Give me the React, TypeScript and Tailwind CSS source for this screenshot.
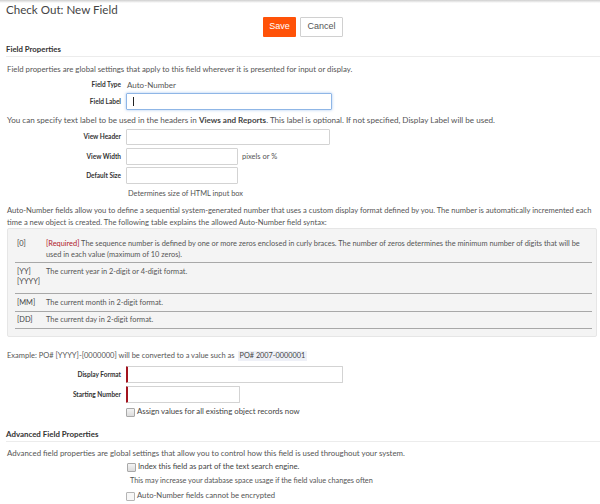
import React from "react";

const Label = ({ children }: { children: React.ReactNode }) => (
  <div className="w-[115px] shrink-0 text-right text-[6.5px] font-bold text-[#333]">{children}</div>
);

const Check = () => (
  <span className="inline-block w-[9px] h-[9px] border border-[#a9a9a9] bg-linear-to-b from-[#f4f4f4] to-[#dcdcdc] rounded-[1px] shrink-0" />
);

export default function App() {
  return (
    <div className="w-[600px] h-[504px] overflow-hidden bg-white text-[#555] text-[7.5px]" style={{ fontFamily: "Lato, 'Open Sans', sans-serif" }}>
      <div className="h-[3px] bg-linear-to-b from-[#cfcfcf] to-white" />
      <div className="h-[14px] leading-[14px] pl-[6px] text-[11.6px] text-[#444]">Check Out: New Field</div>
      <div className="h-[20px] flex justify-center gap-[4px] pl-[6px]" style={{ fontFamily: "'Liberation Sans', Arial, sans-serif" }}>
        <button className="w-[33px] h-[20px] bg-[#ff5208] text-white text-[9px] rounded-[1px]">Save</button>
        <button className="w-[43px] h-[20px] bg-white border border-[#d0d0d0] text-[#555] text-[9px] rounded-[1px]">Cancel</button>
      </div>
      <div className="mt-[5px] h-[15px] leading-[14px] ml-[6px] border-b border-[#ececec] text-[7.8px] font-bold text-[#333]">Field Properties</div>
      <div className="mt-[6px] h-[12px] leading-[12px] pl-[7px] text-[7.8px]">Field properties are global settings that apply to this field wherever it is presented for input or display.</div>
      <div className="mt-[4px] h-[12px] flex items-center gap-[6px] pl-[6px]">
        <Label>Field Type</Label>
        <span className="text-[8px] text-[#555]">Auto-Number</span>
      </div>
      <div className="mt-[2px] h-[17px] flex items-center gap-[5px] pl-[6px]">
        <Label>Field Label</Label>
        <div className="w-[206px] h-[17px] border border-[#8fb6e6] rounded-[1px] shadow-[0_0_3px_rgba(90,150,230,0.55)] flex items-center pl-[6px]">
          <span className="w-px h-[9px] bg-[#222]" />
        </div>
      </div>
      <div className="mt-[4px] h-[12px] leading-[12px] pl-[7px] text-[8.1px] whitespace-nowrap">
        You can specify text label to be used in the headers in <b className="text-[#444]">Views and Reports</b>. This label is optional. If not specified, Display Label will be used.
      </div>
      <div className="mt-[3px] h-[16px] flex items-center gap-[5px] pl-[6px]">
        <Label>View Header</Label>
        <div className="w-[204px] h-[16px] border border-[#d3d3d3] rounded-[1px]" />
      </div>
      <div className="mt-[3px] h-[17px] flex items-center gap-[5px] pl-[6px]">
        <Label>View Width</Label>
        <div className="w-[112px] h-[17px] border border-[#d3d3d3] rounded-[1px]" />
        <span className="ml-[-1px]">pixels or %</span>
      </div>
      <div className="mt-[2px] h-[17px] flex items-center gap-[5px] pl-[6px]">
        <Label>Default Size</Label>
        <div className="w-[112px] h-[17px] border border-[#d3d3d3] rounded-[1px]" />
      </div>
      <div className="mt-[4px] h-[12px] leading-[12px] pl-[128px] text-[7.4px]">Determines size of HTML input box</div>
      <div className="mt-[5px] leading-[11.5px] pl-[7px] pr-[4px] text-[7.6px]">
        Auto-Number fields allow you to define a sequential system-generated number that uses a custom display format defined by you. The number is automatically incremented each time a new object is created. The following table explains the allowed Auto-Number field syntax:
      </div>
      <div className="ml-[7px] mr-[3px] h-[109px] bg-[#f4f4f4] border border-[#e6e6e6] rounded-[2px] pt-[7px] pl-[7px] pr-[4px] text-[7.4px] text-[#555]">
        <div className="h-[27px] flex border-b border-[#a8a8a8] leading-[11px] pt-[2px]">
          <div className="w-[31px] pl-[2px] shrink-0 text-[#444]">[0]</div>
          <div><span className="text-[#b0202a]">[Required]</span> The sequence number is defined by one or more zeros enclosed in curly braces. The number of zeros determines the minimum number of digits that will be used in each value (maximum of 10 zeros).</div>
        </div>
        <div className="h-[31px] flex border-b border-[#a8a8a8] leading-[10px] pt-[4px]">
          <div className="w-[31px] pl-[2px] shrink-0 text-[#444]">[YY]<br />[YYYY]</div>
          <div>The current year in 2-digit or 4-digit format.</div>
        </div>
        <div className="h-[18px] flex items-center border-b border-[#a8a8a8]">
          <div className="w-[31px] pl-[2px] shrink-0 text-[#444]">[MM]</div>
          <div>The current month in 2-digit format.</div>
        </div>
        <div className="h-[17px] flex items-center border-b border-[#a8a8a8]">
          <div className="w-[31px] pl-[2px] shrink-0 text-[#444]">[DD]</div>
          <div>The current day in 2-digit format.</div>
        </div>
      </div>
      <div className="mt-[13px] h-[12px] flex items-center pl-[7px]">
        <span>Example: PO# [YYYY]-[0000000] will be converted to a value such as</span>
        <span className="ml-[3px] px-[2px] bg-[#eef0f7] text-[#444] text-[7.3px]">PO# 2007-0000001</span>
      </div>
      <div className="mt-[4px] h-[17px] flex items-center gap-[5px] pl-[6px]">
        <Label>Display Format</Label>
        <div className="w-[217px] h-[17px] border border-[#d3d3d3] border-l-2 border-l-[#a3141f] rounded-[1px]" />
      </div>
      <div className="mt-[3px] h-[17px] flex items-center gap-[5px] pl-[6px]">
        <Label>Starting Number</Label>
        <div className="w-[114px] h-[17px] border border-[#d3d3d3] border-l-2 border-l-[#a3141f] rounded-[1px]" />
      </div>
      <div className="mt-[3px] h-[12px] flex items-center gap-[2px] pl-[126px] text-[7.8px] text-[#444]">
        <Check />
        <span>Assign values for all existing object records now</span>
      </div>
      <div className="mt-[9px] h-[15px] leading-[14px] ml-[6px] border-b border-[#ececec] text-[7.9px] font-bold text-[#333]">Advanced Field Properties</div>
      <div className="mt-[5px] h-[12px] leading-[12px] pl-[7px] text-[7.85px]">Advanced field properties are global settings that allow you to control how this field is used throughout your system.</div>
      <div className="mt-[2px] h-[12px] flex items-center gap-[2px] pl-[127px] text-[7.7px] text-[#444]">
        <Check />
        <span>Index this field as part of the text search engine.</span>
      </div>
      <div className="mt-[2px] h-[12px] leading-[12px] pl-[130px] text-[7.3px]">This may increase your database space usage if the field value changes often</div>
      <div className="mt-[3px] h-[12px] flex items-center gap-[2px] pl-[126px] text-[7.7px] text-[#555]">
        <span className="inline-block w-[9px] h-[9px] border border-[#b5b5b5] bg-[#f7f7f7] rounded-[1px] shrink-0" />
        <span>Auto-Number fields cannot be encrypted</span>
      </div>
    </div>
  );
}
